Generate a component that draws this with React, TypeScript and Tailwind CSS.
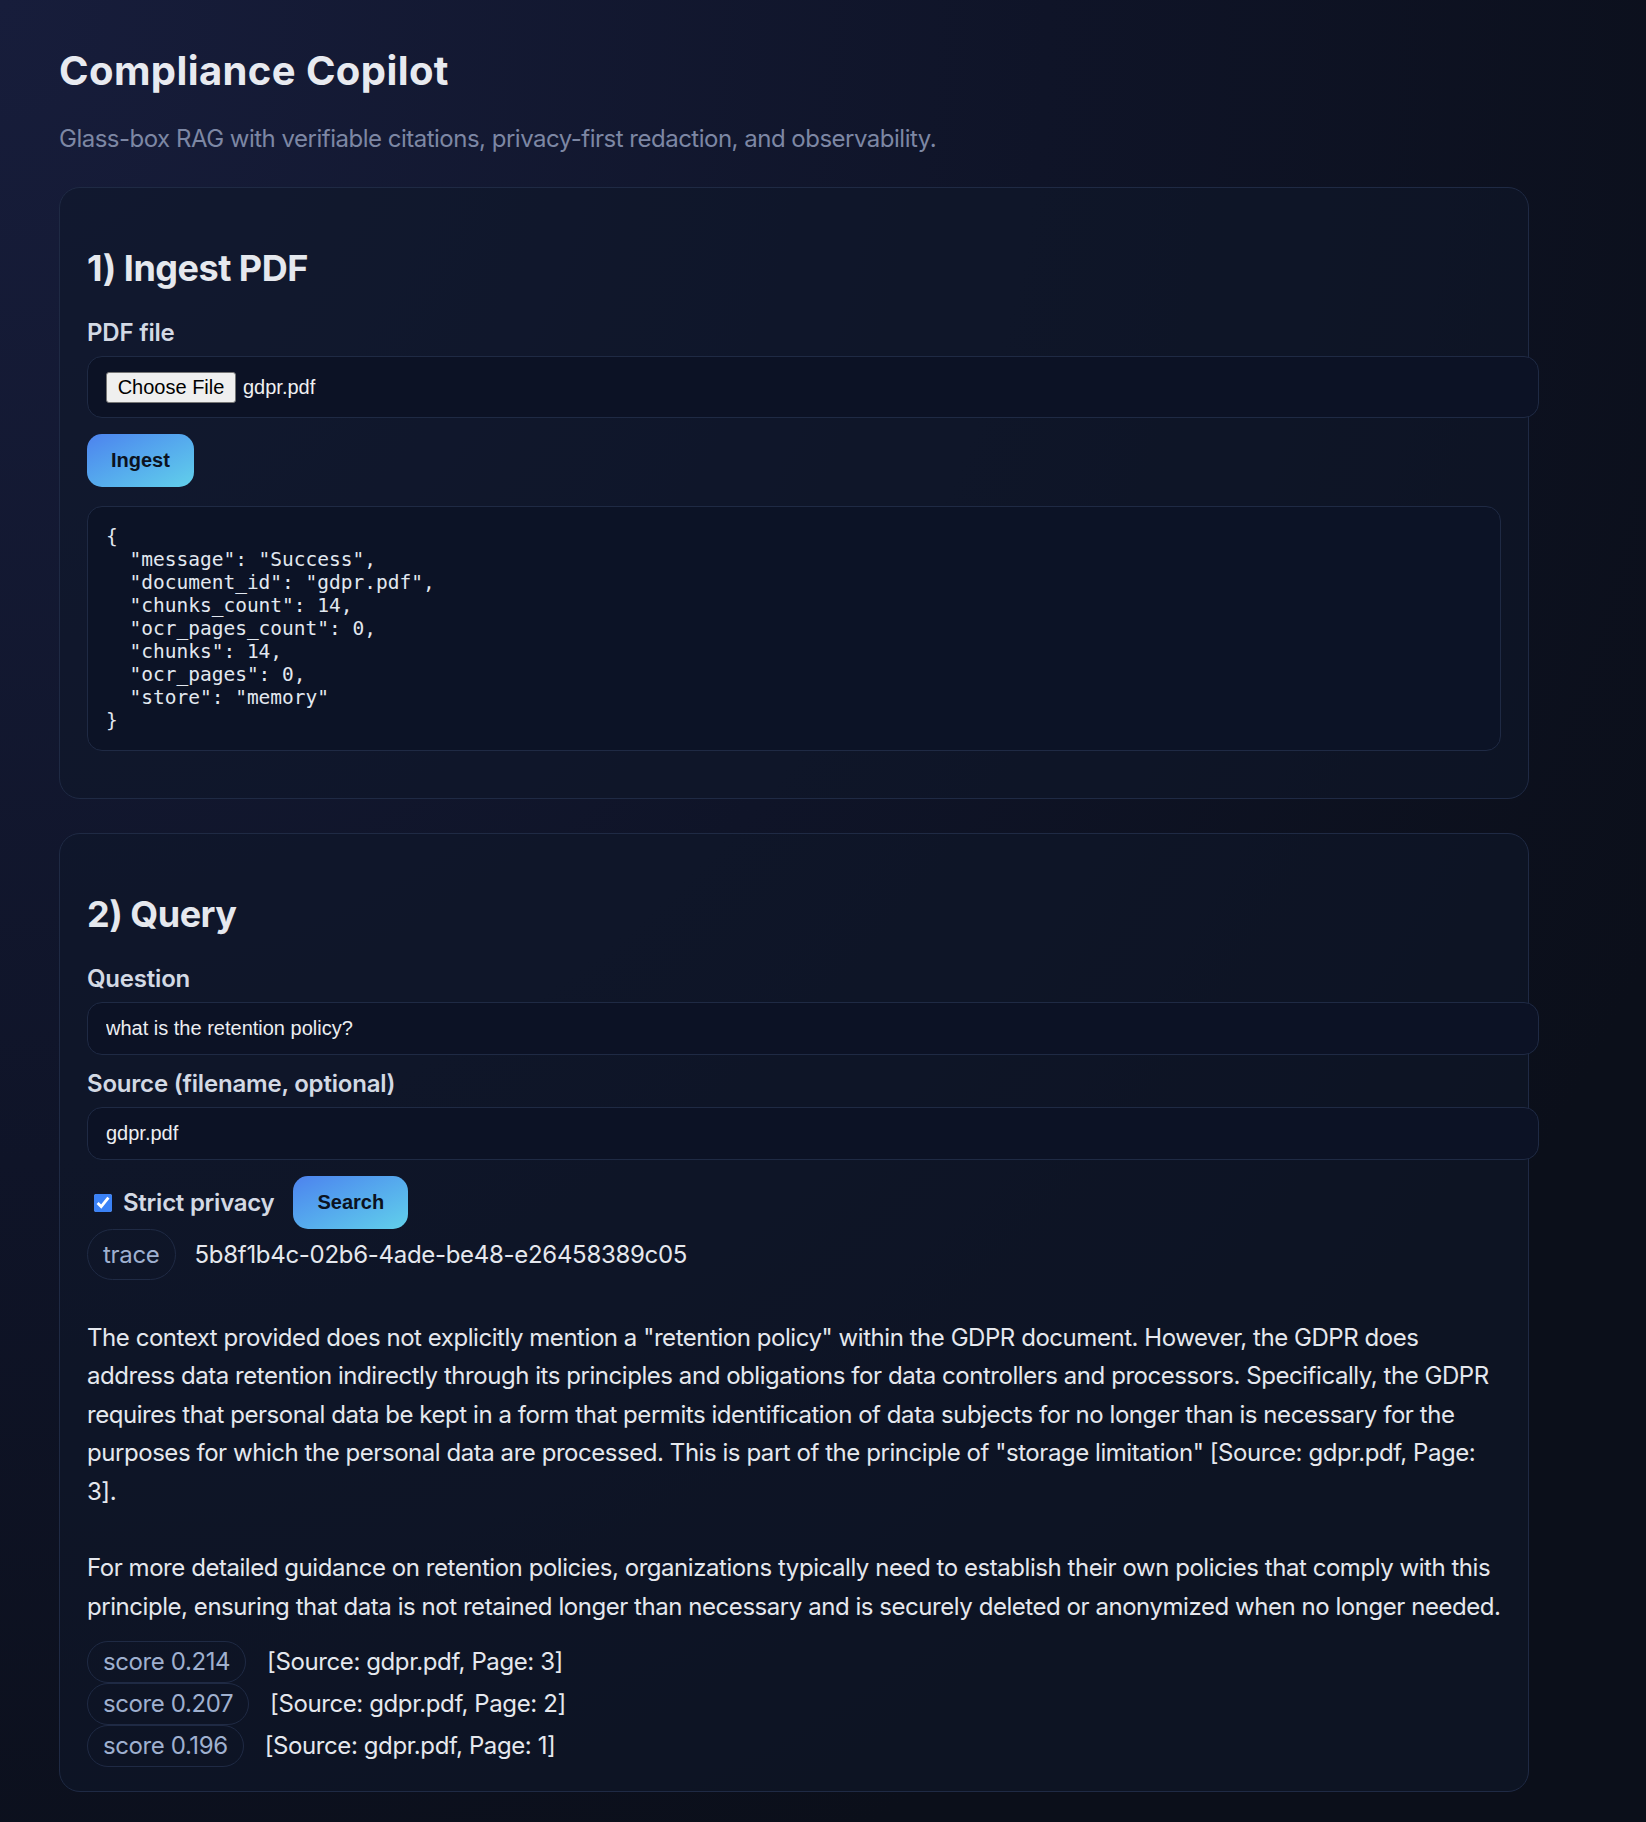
import React from "react";

// line breaks follow the reference wrap
const answer = `The context provided does not explicitly mention a "retention policy" within the GDPR document. However, the GDPR does
address data retention indirectly through its principles and obligations for data controllers and processors. Specifically, the GDPR
requires that personal data be kept in a form that permits identification of data subjects for no longer than is necessary for the
purposes for which the personal data are processed. This is part of the principle of "storage limitation" [Source: gdpr.pdf, Page:
3].

For more detailed guidance on retention policies, organizations typically need to establish their own policies that comply with this
principle, ensuring that data is not retained longer than necessary and is securely deleted or anonymized when no longer needed.`;

const ingestResult = `{
  "message": "Success",
  "document_id": "gdpr.pdf",
  "chunks_count": 14,
  "ocr_pages_count": 0,
  "chunks": 14,
  "ocr_pages": 0,
  "store": "memory"
}`;

const scores = [
  { score: "0.214", page: 3 },
  { score: "0.207", page: 2 },
  { score: "0.196", page: 1 },
];

function Label({ children }: { children: React.ReactNode }) {
  return <div className="mb-[9px] text-[24px] leading-[29px] font-semibold tracking-[-0.2px] text-[#d3d9e4]">{children}</div>;
}

function TextField({ value }: { value: string }) {
  return (
    <input
      readOnly
      value={value}
      className="box-content block w-full h-[23px] px-[18px] py-[14px] rounded-[15px] border border-[#1f2a44] bg-[#0c1225] text-[20px] leading-[23px] text-[#eceef2] font-['Liberation_Sans',Arial,sans-serif] outline-none"
    />
  );
}

function GradientButton({ children }: { children: React.ReactNode }) {
  return (
    <button className="rounded-[15px] px-[24px] py-[15px] text-[20px] leading-[23px] font-bold text-[#0b1220] bg-linear-to-br from-[#4d82ee] to-[#62d0ea] font-['Liberation_Sans',Arial,sans-serif]">
      {children}
    </button>
  );
}

function Card({ children, className = "" }: { children: React.ReactNode; className?: string }) {
  return (
    <section className={"w-[1470px] rounded-[21px] border border-[#1f2a44] bg-[#0f172a]/60 px-[27px] pt-[27px] " + className}>
      {children}
    </section>
  );
}

export default function App() {
  return (
    <div className="min-h-[1822px] bg-[#0b0f1a] bg-[radial-gradient(ellipse_at_top_left,#171d3b_0%,#0f1428_45%,#0b0f1a_80%)] pl-[59px] pt-[47px] pb-[32px] font-['Inter','Noto_Sans',sans-serif] text-[#e5e8ee]">
      <h1 className="text-[40px] leading-[48px] font-bold tracking-[0.4px] text-[#e8eaf0]">Compliance Copilot</h1>
      <p className="mt-[29px] text-[24px] leading-[29px] tracking-[-0.5px] text-[#7d87a4]">
        Glass-box RAG with verifiable citations, privacy-first redaction, and observability.
      </p>

      <Card className="mt-[34px] pb-[27px]">
        <h2 className="mt-[31px] text-[36px] leading-[44px] font-bold tracking-[-0.5px] text-[#e5e8ee]">1) Ingest PDF</h2>
        <div className="mt-[28px]">
          <Label>PDF file</Label>
          <div className="box-content w-full h-[32px] px-[18px] py-[14px] rounded-[15px] border border-[#1f2a44] bg-[#0c1225] flex items-center font-['Liberation_Sans',Arial,sans-serif] text-[20px]">
            <span className="h-[31px] w-[130px] flex items-center justify-center rounded-[3px] border border-[#767676] bg-[#efefef] text-black leading-[23px]">
              Choose File
            </span>
            <span className="ml-[7px] text-[#f0f0f2]">gdpr.pdf</span>
          </div>
        </div>
        <div className="mt-[16px]">
          <GradientButton>Ingest</GradientButton>
        </div>
        <pre className="mt-[19px] mb-[20px] p-[18px] rounded-[15px] border border-[#1f2a44] bg-[#0c1326] font-['DejaVu_Sans_Mono',monospace] text-[19.5px] leading-[23px] text-[#e2e8f0]">
          {ingestResult}
        </pre>
      </Card>

      <Card className="mt-[34px] pb-[24px]">
        <h2 className="mt-[31px] text-[36px] leading-[44px] font-bold tracking-[-0.5px] text-[#e5e8ee]">2) Query</h2>
        <div className="mt-[28px]">
          <Label>Question</Label>
          <TextField value="what is the retention policy?" />
        </div>
        <div className="mt-[14px]">
          <Label>Source (filename, optional)</Label>
          <TextField value="gdpr.pdf" />
        </div>

        <div className="mt-[16px] flex items-center">
          <input type="checkbox" defaultChecked className="ml-[7px] w-[18px] h-[18px] accent-[#3b82f6]" />
          <span className="ml-[11px] text-[24px] leading-[29px] font-semibold tracking-[-0.25px] text-[#d3d9e4]">Strict privacy</span>
          <div className="ml-[19px]">
            <GradientButton>Search</GradientButton>
          </div>
        </div>

        <div className="flex items-center tracking-[-0.3px]">
          <span className="rounded-full border border-[#1f2a44] px-[15px] py-[10px] text-[24px] leading-[29px] text-[#9fb0cf]">trace</span>
          <span className="ml-[19px] text-[24px] leading-[29px] text-[#e5e8ee]">5b8f1b4c-02b6-4ade-be48-e26458389c05</span>
        </div>

        <p className="mt-[39px] whitespace-pre-wrap text-[24px] leading-[38.4px] tracking-[-0.45px] text-[#e5e8ee]">{answer}</p>

        <div className="mt-[15px] flex flex-col tracking-[-0.4px]">
          {scores.map((s) => (
            <div key={s.score} className="flex items-center">
              <span className="h-[42px] flex items-center rounded-full border border-[#1f2a44] px-[15px] text-[24px] text-[#9fb0cf]">
                score {s.score}
              </span>
              <span className="ml-[21px] text-[24px] text-[#e5e8ee]">[Source: gdpr.pdf, Page: {s.page}]</span>
            </div>
          ))}
        </div>
      </Card>
    </div>
  );
}
